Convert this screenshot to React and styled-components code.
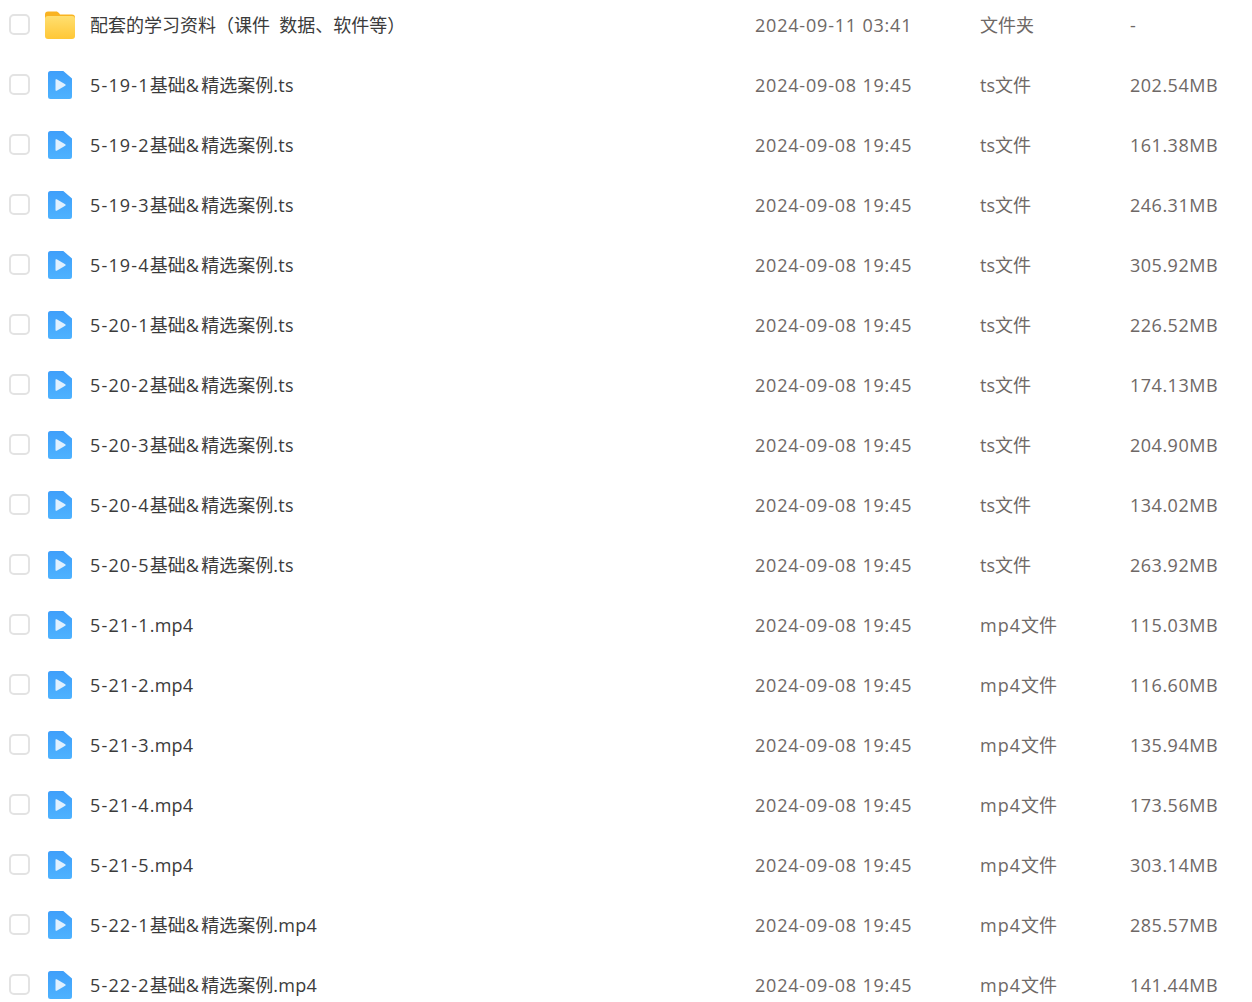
import React from "react";
import styled, { createGlobalStyle } from "styled-components";

const files = [
  { name: "配套的学习资料（课件  数据、软件等）", date: "2024-09-11 03:41", type: "文件夹", size: "-", folder: true },
  { name: "5-19-1基础&精选案例.ts", type: "ts文件", size: "202.54MB" },
  { name: "5-19-2基础&精选案例.ts", type: "ts文件", size: "161.38MB" },
  { name: "5-19-3基础&精选案例.ts", type: "ts文件", size: "246.31MB" },
  { name: "5-19-4基础&精选案例.ts", type: "ts文件", size: "305.92MB" },
  { name: "5-20-1基础&精选案例.ts", type: "ts文件", size: "226.52MB" },
  { name: "5-20-2基础&精选案例.ts", type: "ts文件", size: "174.13MB" },
  { name: "5-20-3基础&精选案例.ts", type: "ts文件", size: "204.90MB" },
  { name: "5-20-4基础&精选案例.ts", type: "ts文件", size: "134.02MB" },
  { name: "5-20-5基础&精选案例.ts", type: "ts文件", size: "263.92MB" },
  { name: "5-21-1.mp4", type: "mp4文件", size: "115.03MB" },
  { name: "5-21-2.mp4", type: "mp4文件", size: "116.60MB" },
  { name: "5-21-3.mp4", type: "mp4文件", size: "135.94MB" },
  { name: "5-21-4.mp4", type: "mp4文件", size: "173.56MB" },
  { name: "5-21-5.mp4", type: "mp4文件", size: "303.14MB" },
  { name: "5-22-1基础&精选案例.mp4", type: "mp4文件", size: "285.57MB" },
  { name: "5-22-2基础&精选案例.mp4", type: "mp4文件", size: "141.44MB" },
];

// latin runs are tracked out a little so they keep the widths of the original UI font
const latinRuns = /(\d{4}-\d\d-\d\d \d\d:\d\d|\d+\.\d+MB|[\d-]+|&|\.?[a-z]+\d?)/;

function trackingFor(run) {
  if (run.includes(":")) return 0.8;
  if (run.endsWith("MB")) return 0.5;
  if (run === "&") return 2.5;
  if (run.startsWith(".")) return 0.25;
  if (run === "mp4") return 1;
  if (run === "ts") return 0;
  return 1.15;
}

function MixedText({ text }) {
  return text.split(latinRuns).map((run, i) =>
    i % 2 ? (
      <Latin key={i} $tracking={trackingFor(run)}>
        {run}
      </Latin>
    ) : (
      run
    )
  );
}

function FolderIcon() {
  return (
    <svg width="30" height="28" viewBox="0 0 30 28">
      <defs>
        <linearGradient id="folderFront" x1="0" y1="0" x2="0" y2="1">
          <stop offset="0" stopColor="#ffdf70" />
          <stop offset="1" stopColor="#ffc736" />
        </linearGradient>
      </defs>
      <path d="M0 3.500a3 3 0 0 1 3-3h8c1.400 0 2 .6 3 1.600L15 3.500h12a3 3 0 0 1 3 3v4H0z" fill="#f9b321" />
      <rect x="0" y="5" width="30" height="23" rx="3" fill="url(#folderFront)" />
    </svg>
  );
}

function VideoIcon() {
  return (
    <svg width="24" height="28" viewBox="0 0 24 28">
      <defs>
        <linearGradient id="videoBody" x1="0" y1="0" x2="0" y2="1">
          <stop offset="0" stopColor="#3f9ffa" />
          <stop offset="1" stopColor="#4db2ff" />
        </linearGradient>
      </defs>
      <path d="M2.500 0h12.800L24 7.500V25.500a2.500 2.500 0 0 1-2.500 2.500H2.500A2.500 2.500 0 0 1 0 25.500V2.500A2.500 2.500 0 0 1 2.500 0z" fill="url(#videoBody)" />
      <path d="M7.500 9v10a.8.8 0 0 0 1.200.7l8.500-5a.8.8 0 0 0 0-1.400l-8.500-5a.8.8 0 0 0-1.200.7z" fill="#dff0ff" />
    </svg>
  );
}

export default function App() {
  return (
    <>
      <GlobalStyle />
      <Page>
        <List>
          {files.map((file) => (
            <Row key={file.name}>
              <Check />
              <IconCell>{file.folder ? <FolderIcon /> : <VideoIcon />}</IconCell>
              <Name>
                <MixedText text={file.name} />
              </Name>
              <Meta>
                <MixedText text={file.date || "2024-09-08 19:45"} />
              </Meta>
              <Meta>
                <MixedText text={file.type} />
              </Meta>
              <Meta>
                <MixedText text={file.size} />
              </Meta>
            </Row>
          ))}
        </List>
      </Page>
    </>
  );
}

const GlobalStyle = createGlobalStyle`
  body {
    margin: 0;
    background: #fff;
    font-family: "Open Sans", "Noto Sans CJK SC", sans-serif;
  }
`;

const Page = styled.div`
  height: 1002px;
  overflow: hidden;
`;

const List = styled.div`
  margin-top: -5px;
`;

const Row = styled.div`
  display: grid;
  grid-template-columns: 36px 45px 665px 225px 150px 1fr;
  align-items: center;
  height: 60px;
  padding-left: 9px;
`;

const Check = styled.span`
  box-sizing: border-box;
  width: 21px;
  height: 21px;
  margin-bottom: 2px;
  border: 2px solid #e3e3e3;
  border-radius: 5px;
  background: #fff;
`;

const IconCell = styled.div`
  display: flex;
  justify-content: center;
  width: 30px;
`;

const Name = styled.div`
  font-size: 18px;
  line-height: 26px;
  color: #3b3b3b;
  white-space: pre;
`;

const Meta = styled(Name)`
  color: #6e6866;
`;

const Latin = styled.span`
  letter-spacing: ${(p) => p.$tracking}px;
`;
